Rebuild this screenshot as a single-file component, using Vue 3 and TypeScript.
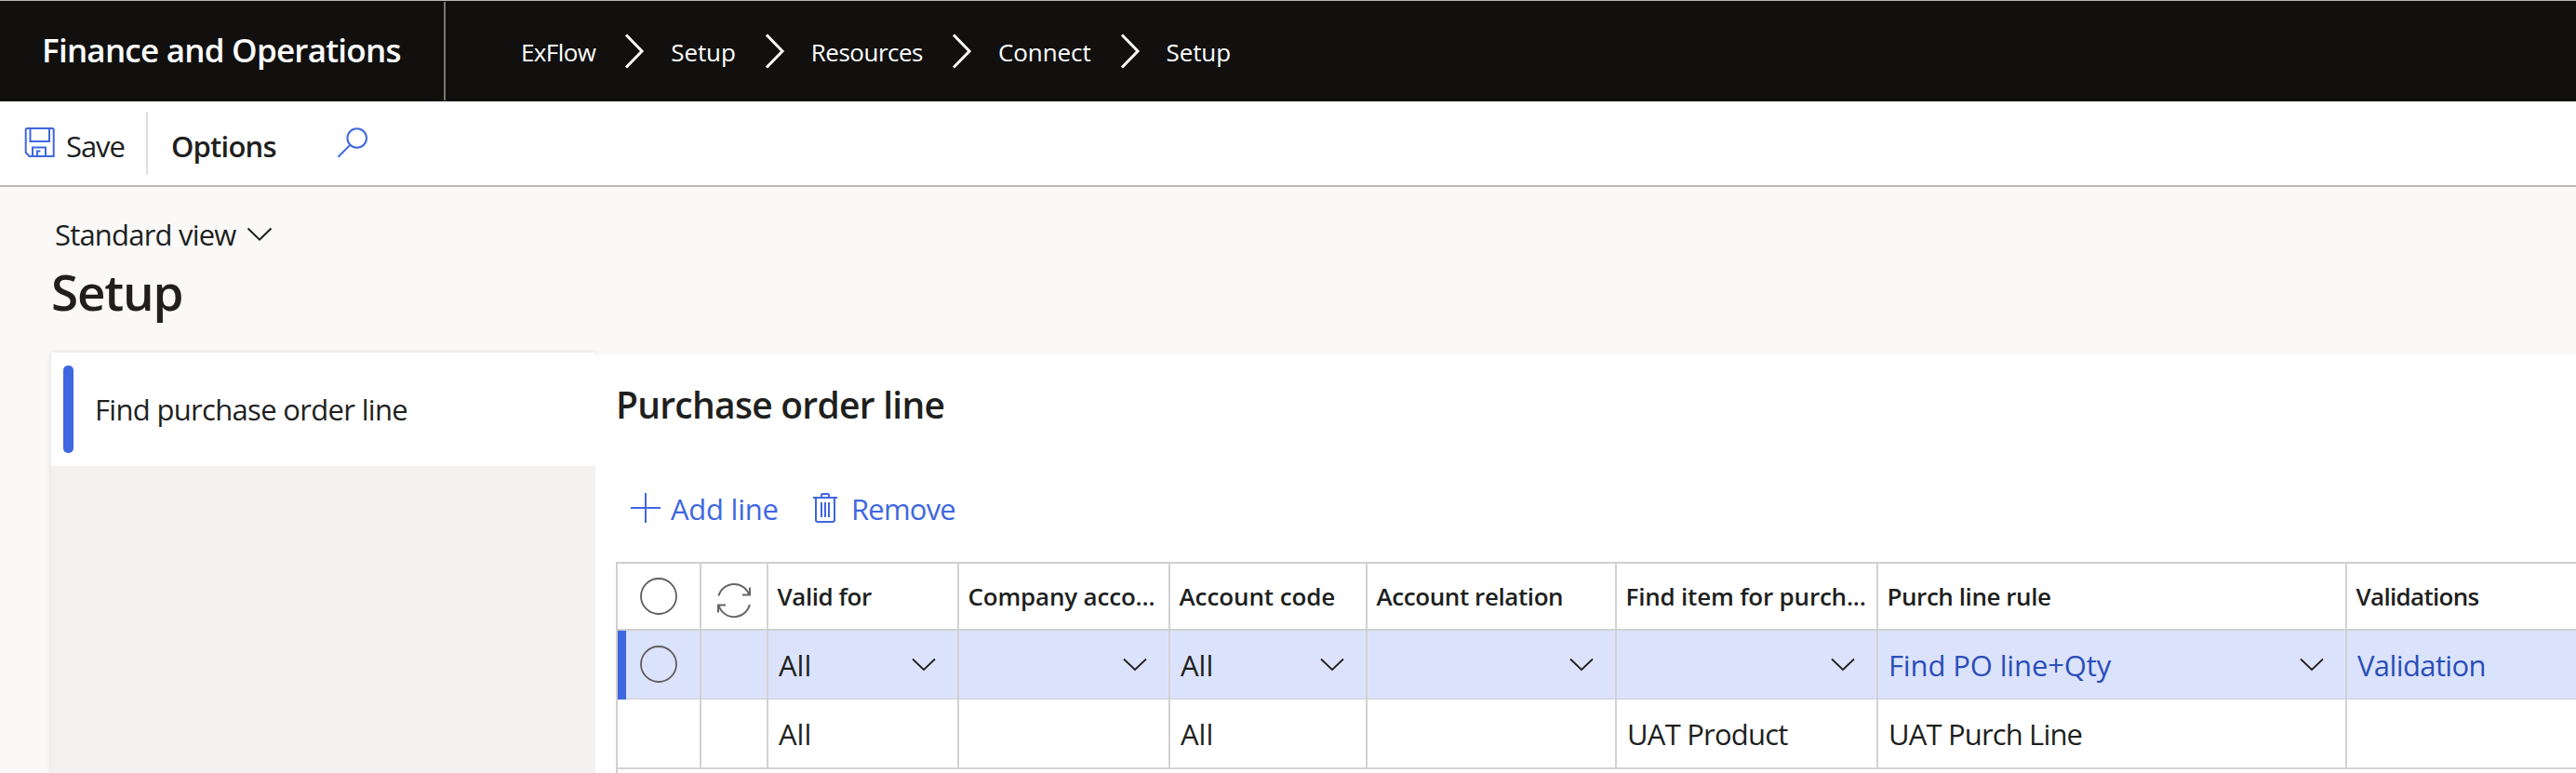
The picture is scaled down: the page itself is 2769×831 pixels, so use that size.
<script setup lang="ts">
interface Label {
  text: string
  tracking: number
}
interface Cell extends Label {
  link?: boolean
  dropdown?: boolean
}

const crumbs: Label[] = [
  { text: 'ExFlow', tracking: -0.6 },
  { text: 'Setup', tracking: -0.1 },
  { text: 'Resources', tracking: -0.49 },
  { text: 'Connect', tracking: -0.1 },
  { text: 'Setup', tracking: -0.1 },
]

const columns: Label[] = [
  { text: 'Valid for', tracking: -0.44 },
  { text: 'Company acco...', tracking: -0.19 },
  { text: 'Account code', tracking: -0.1 },
  { text: 'Account relation', tracking: -0.42 },
  { text: 'Find item for purch...', tracking: -0.2 },
  { text: 'Purch line rule', tracking: -0.44 },
  { text: 'Validations', tracking: -0.69 },
]

const rows: { selected: boolean; cells: Cell[] }[] = [
  {
    selected: true,
    cells: [
      { text: 'All', tracking: 0, dropdown: true },
      { text: '', tracking: 0, dropdown: true },
      { text: 'All', tracking: 0, dropdown: true },
      { text: '', tracking: 0, dropdown: true },
      { text: '', tracking: 0, dropdown: true },
      { text: 'Find PO line+Qty', tracking: -0.13, link: true, dropdown: true },
      { text: 'Validation', tracking: -0.61, link: true },
    ],
  },
  {
    selected: false,
    cells: [
      { text: 'All', tracking: 0 },
      { text: '', tracking: 0 },
      { text: 'All', tracking: 0 },
      { text: '', tracking: 0 },
      { text: 'UAT Product', tracking: -0.78 },
      { text: 'UAT Purch Line', tracking: -0.85 },
      { text: '', tracking: 0 },
    ],
  },
]

const spacing = (l: Label) => ({ letterSpacing: l.tracking + 'px' })
</script>

<template>
  <div class="page">
    <header class="topbar">
      <div class="brand">Finance and Operations</div>
      <nav class="crumbs">
        <template v-for="(c, i) in crumbs" :key="i">
          <svg v-if="i > 0" class="crumb-sep" width="22" height="38" viewBox="0 0 22 38">
            <path d="M2 1.5 L19 19 L2 36.5" fill="none" stroke="#fff" stroke-width="3" />
          </svg>
          <span :style="spacing(c)">{{ c.text }}</span>
        </template>
      </nav>
    </header>

    <div class="toolbar">
      <button class="save">
        <svg width="34" height="34" viewBox="0 0 34 34" fill="none" stroke="#3f67e0" stroke-width="2">
          <path d="M2.700 3.500 Q2.700 2 4.200 2 H31.200 Q32.700 2 32.700 3.500 V32 H6.500 L2.700 28 Z" />
          <path d="M7.500 2 V16 H28 V2" />
          <path d="M10 32 V22.500 H24 V32 M15 32 V26.500 H18.500" />
        </svg>
        <span>Save</span>
      </button>
      <div class="divider"></div>
      <span class="options">Options</span>
      <svg class="search" width="34" height="34" viewBox="0 0 34 34" fill="none" stroke="#3f67e0" stroke-width="2">
        <circle cx="21.700" cy="11.500" r="10.300" />
        <path d="M14.300 18.900 L1.500 31.700" />
      </svg>
    </div>

    <div class="heading">
      <div class="view">
        <span>Standard view</span>
        <svg width="28" height="16" viewBox="0 0 28 16">
          <path d="M1.500 1.500 L14 13.600 L26.500 1.500" fill="none" stroke="#201f1e" stroke-width="2" />
        </svg>
      </div>
      <h1>Setup</h1>
    </div>

    <main class="body">
      <aside class="side">
        <div class="side-item">
          <i></i>
          <span>Find purchase order line</span>
        </div>
      </aside>
      <section class="content">
        <h2>Purchase order line</h2>
        <div class="actions">
          <svg width="32" height="32" viewBox="0 0 32 32">
            <path d="M16 0 V32 M0 16 H32" stroke="#3f67e0" stroke-width="2" />
          </svg>
          <span class="add">Add line</span>
          <svg width="26" height="32" viewBox="0 0 26 32" fill="none" stroke="#3f67e0" stroke-width="2">
            <path d="M0 5 H26 M9 5 V2 Q9 1 10 1 H16 Q17 1 17 2 V5" />
            <path d="M3 5 V29 Q3 31 5 31 H21 Q23 31 23 29 V5" />
            <path d="M9 10 V26 M13 10 V26 M17 10 V26" />
          </svg>
          <span class="remove">Remove</span>
        </div>

        <div class="grid">
          <div class="row head">
            <div class="cell pick">
              <svg width="42" height="42" viewBox="0 0 42 42"><circle cx="21" cy="21" r="19" fill="none" stroke="#605e5c" stroke-width="1.8" /></svg>
            </div>
            <div class="cell sync">
              <svg width="38" height="38" viewBox="0 0 38 38" fill="none" stroke="#666" stroke-width="2">
                <path d="M2.500 14.500 A17.200 17.200 0 0 1 35.500 14 M36 5.500 V13.500 H28" />
                <path d="M35.800 24 A17.200 17.200 0 0 1 2.500 24.500 M2 32.500 V24.500 H10" />
              </svg>
            </div>
            <div v-for="(c, i) in columns" :key="i" class="cell title" :style="spacing(c)">{{ c.text }}</div>
          </div>
          <div v-for="(r, i) in rows" :key="i" class="row" :class="{ selected: r.selected }">
            <div class="cell pick">
              <svg v-if="r.selected" width="42" height="42" viewBox="0 0 42 42"><circle cx="21" cy="21" r="19" fill="none" stroke="#605e5c" stroke-width="1.8" /></svg>
            </div>
            <div class="cell"></div>
            <div v-for="(c, j) in r.cells" :key="j" class="cell value" :class="{ link: c.link }">
              <span :style="spacing(c)">{{ c.text }}</span>
              <svg v-if="c.dropdown" width="26" height="15" viewBox="0 0 26 15">
                <path d="M1 1.500 L13 13 L25 1.500" fill="none" stroke="#201f1e" stroke-width="1.800" />
              </svg>
            </div>
          </div>
          <div class="rest"></div>
        </div>
      </section>
    </main>
  </div>
</template>

<style>
body {
  margin: 0;
  overflow: hidden;
}
</style>

<style scoped>
* {
  box-sizing: border-box;
}
.page {
  width: 2769px;
  height: 831px;
  overflow: hidden;
  display: flex;
  flex-direction: column;
  background: #faf9f8;
  color: #201f1e;
  font-family: 'Open Sans', 'Noto Sans', sans-serif;
  font-size: 31px;
  white-space: nowrap;
}
svg {
  display: block;
  flex: none;
}
.topbar {
  height: 109px;
  flex: none;
  display: flex;
  background: #11100f;
  border-top: 1px solid #b9bab5;
  color: #fff;
}
.brand {
  width: 479px;
  margin-top: 1px;
  height: 106px;
  padding-left: 45px;
  border-right: 2px solid #787673;
  font-size: 35px;
  font-weight: 600;
  letter-spacing: -0.76px;
  line-height: 104px;
}
.crumbs {
  display: flex;
  align-items: flex-start;
  padding-left: 81px;
  font-size: 26px;
  line-height: 110px;
}
.crumb-sep {
  margin: 35px 28px 0 31px;
}
.toolbar {
  height: 92px;
  flex: none;
  display: flex;
  align-items: flex-start;
  background: #fff;
  border-bottom: 2px solid #b9b8b7;
  line-height: 96px;
}
.save {
  display: flex;
  border: 0;
  padding: 0;
  background: none;
  color: inherit;
  font: inherit;
  width: 157px;
  padding-left: 25px;
  letter-spacing: -1.07px;
}
.save svg {
  margin: 27px 12px 0 0;
}
.divider {
  width: 2px;
  height: 68px;
  margin-top: 11px;
  background: #e1dfdd;
}
.options {
  width: 203px;
  padding-left: 25px;
  font-weight: 600;
  letter-spacing: -0.79px;
}
.search {
  margin-top: 28px;
}
.heading {
  height: 178px;
  flex: none;
  padding-top: 29px;
}
.view {
  display: flex;
  align-items: flex-start;
  padding-left: 59px;
  line-height: 44px;
  letter-spacing: -0.8px;
}
.view svg {
  margin: 14px 0 0 11px;
}
h1 {
  margin: 5px 0 0;
  padding-left: 55px;
  font-size: 53px;
  font-weight: 600;
  line-height: 70px;
  letter-spacing: -1.2px;
}
.body {
  flex: 1;
  display: flex;
  min-height: 0;
  padding-left: 55px;
}
.side {
  width: 585px;
  background: #f3f2f1;
  box-shadow: 0 0 5px rgba(0, 0, 0, 0.14);
}
.side-item {
  height: 122px;
  display: flex;
  align-items: flex-start;
  padding: 14px 0 0 13px;
  background: #fff;
}
.side-item i {
  width: 11px;
  height: 94px;
  border-radius: 5px;
  background: #3f67e0;
}
.side-item span {
  padding-left: 23px;
  line-height: 94px;
  letter-spacing: -0.68px;
}
.content {
  flex: 1;
  position: relative;
  margin-top: 2px;
  padding-left: 22px;
  background: #fff;
}
h2 {
  margin: 34px 0 0;
  line-height: 40px;
  font-size: 39px;
  font-weight: 600;
  letter-spacing: -0.74px;
}
.actions {
  height: 149px;
  display: flex;
  align-items: flex-start;
  padding: 75px 0 0 16px;
  color: #3f67e0;
  line-height: 34px;
}
.add {
  width: 164px;
  padding-left: 11px;
  letter-spacing: -0.25px;
}
.remove {
  padding-left: 15px;
  letter-spacing: -0.8px;
}
.grid {
  border-left: 2px solid #d2d0ce;
  border-top: 2px solid #d2d0ce;
}
.row {
  display: grid;
  grid-template-columns: 90px 72px 205px 227px 212px 268px 281px 504px 246px;
  height: 75px;
  border-bottom: 2px solid #d4d3d2;
}
.row.head {
  height: 72px;
  border-bottom: 2px solid #d2d0ce;
}
.row.selected {
  height: 74px;
  background: #dbe3fc;
  border-bottom: 1px solid #cdcdd1;
}
.cell {
  border-right: 2px solid #d2d2d2;
}
.cell:last-child {
  border-right: 0;
}
.pick {
  display: flex;
  justify-content: center;
  padding-top: 14px;
}
.selected .pick {
  padding-top: 15px;
  border-left: 9px solid #3f67e0;
  padding-right: 9px;
}
.sync {
  padding: 20px 0 0 16px;
}
.title {
  padding-left: 9.5px;
  font-size: 26px;
  font-weight: 600;
  line-height: 71px;
}
.value {
  display: flex;
  justify-content: space-between;
  align-items: flex-start;
  padding: 0 23px 0 11px;
  line-height: 74px;
}
.value svg {
  margin-top: 29px;
}
.link {
  color: #2b4eb8;
}
.rest {
  height: 20px;
}
</style>
